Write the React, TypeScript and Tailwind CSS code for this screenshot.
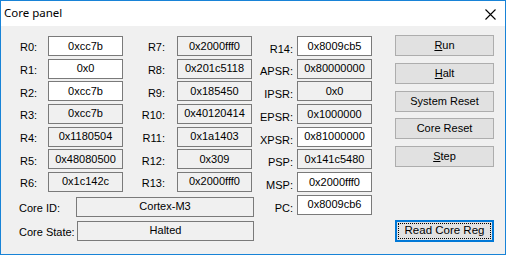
import React from "react";

const white = new Set(["R0", "R1", "R2", "R14", "XPSR", "MSP", "PC"]);

const col1: [string, string][] = [
  ["R0", "0xcc7b"],
  ["R1", "0x0"],
  ["R2", "0xcc7b"],
  ["R3", "0xcc7b"],
  ["R4", "0x1180504"],
  ["R5", "0x48080500"],
  ["R6", "0x1c142c"],
];
const col2: [string, string][] = [
  ["R7", "0x2000fff0"],
  ["R8", "0x201c5118"],
  ["R9", "0x185450"],
  ["R10", "0x40120414"],
  ["R11", "0x1a1403"],
  ["R12", "0x309"],
  ["R13", "0x2000fff0"],
];
const col3: [string, string][] = [
  ["R14", "0x8009cb5"],
  ["APSR", "0x80000000"],
  ["IPSR", "0x0"],
  ["EPSR", "0x1000000"],
  ["XPSR", "0x81000000"],
  ["PSP", "0x141c5480"],
  ["MSP", "0x2000fff0"],
  ["PC", "0x8009cb6"],
];

function Box({ name, value, w = "w-[75px]" }: { name: string; value: string; w?: string }) {
  return (
    <div
      className={`${w} h-[20px] shrink-0 border border-[#7a7a7a] flex items-center justify-center leading-none ${
        white.has(name) ? "bg-white" : "bg-[#f0f0f0]"
      }`}
    >
      {value}
    </div>
  );
}

function Btn({ children, primary = false }: { children: React.ReactNode; primary?: boolean }) {
  if (primary) {
    return (
      <div className="w-[99px] h-[22px] border-2 border-[#0078d7] bg-[#e1e1e1] p-[1px]">
        <div className="w-full h-full border border-dotted border-black flex items-center justify-center leading-none">
          {children}
        </div>
      </div>
    );
  }
  return (
    <div className="w-[99px] h-[21px] border border-[#adadad] bg-[#e1e1e1] flex items-center justify-center leading-none">
      {children}
    </div>
  );
}

export default function App() {
  return (
    <div
      className="w-[506px] h-[255px] border border-[#1883d7] bg-[#f0f0f0] flex flex-col text-[11px] text-black"
      style={{ fontFamily: '"Liberation Sans", Arial, sans-serif' }}
    >
      <div className="h-[25px] bg-white flex items-center justify-between pl-[3px] pr-[9px] shrink-0">
        <span className="text-[11.5px] pb-[1px]" style={{ fontFamily: '"Noto Sans", "Open Sans", sans-serif' }}>
          Core panel
        </span>
        <svg width="11" height="11" viewBox="0 0 11 11" className="mt-[2px]">
          <path d="M0.5 0.5 L10.5 10.5 M10.5 0.5 L0.5 10.5" stroke="#000" strokeWidth="1.1" />
        </svg>
      </div>
      <div className="flex flex-1 pl-[19px]">
        <div className="flex flex-col pt-[10px] w-[232px] shrink-0">
          <div className="flex flex-col gap-[2.67px]">
            {col1.map((r, i) => (
              <div key={r[0]} className="flex h-[20px]">
                <div className="w-[28px] flex items-center pt-[3px]">{r[0]}:</div>
                <Box name={r[0]} value={r[1]} />
                <div className="w-[54px] flex items-center justify-end pr-[12px] pt-[3px]">{col2[i][0]}:</div>
                <Box name={col2[i][0]} value={col2[i][1]} />
              </div>
            ))}
          </div>
          <div className="flex h-[20px] mt-[5px] -ml-[1px]">
            <div className="w-[57px] shrink-0 flex items-center pt-[3px]">Core ID:</div>
            <Box name="id" value="Cortex-M3" w="w-[178px]" />
          </div>
          <div className="flex h-[20px] mt-[4px] -ml-[1px]">
            <div className="w-[58px] shrink-0 flex items-center pt-[3px]">Core State:</div>
            <Box name="state" value="Halted" w="w-[177px]" />
          </div>
        </div>
        <div className="flex flex-col gap-[2.7px] pt-[10px] shrink-0">
          {col3.map((r) => (
            <div key={r[0]} className="flex h-[20px]">
              <div className="w-[45px] flex items-center justify-end pr-[4px] pt-[6px]">{r[0]}:</div>
              <Box name={r[0]} value={r[1]} />
            </div>
          ))}
        </div>
        <div className="flex flex-col ml-[23px] pt-[9px]">
          <div className="flex flex-col gap-[6.75px]">
            <Btn>
              <span className="underline underline-offset-1">R</span>un
            </Btn>
            <Btn>
              <span className="underline underline-offset-1">H</span>alt
            </Btn>
            <Btn>System Reset</Btn>
            <Btn>Core Reset</Btn>
            <Btn>
              <span className="underline underline-offset-1">S</span>tep
            </Btn>
          </div>
          <div className="mt-[53px]">
            <Btn primary>
              <span className="text-[11.5px]">Read Core Reg</span>
            </Btn>
          </div>
        </div>
      </div>
    </div>
  );
}
